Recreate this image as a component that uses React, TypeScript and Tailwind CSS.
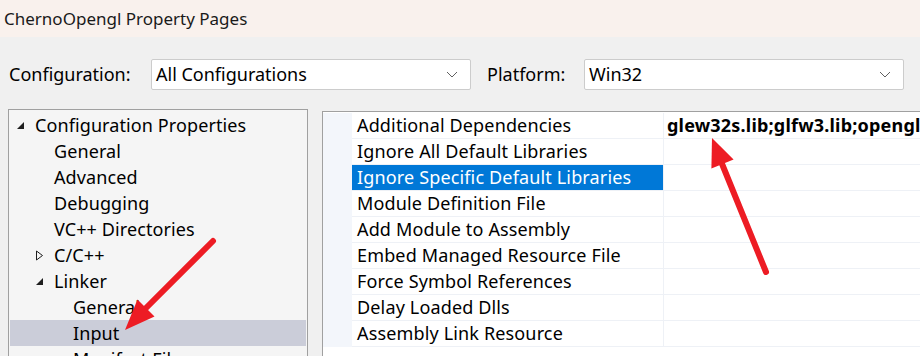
import React from 'react';

const FONT = { fontFamily: '"Noto Sans", "Open Sans", sans-serif' };

type TreeItem = { label: string; level: number; icon?: 'open' | 'closed'; selected?: boolean };

const TREE: TreeItem[] = [
  { label: 'Configuration Properties', level: 0, icon: 'open' },
  { label: 'General', level: 1 },
  { label: 'Advanced', level: 1 },
  { label: 'Debugging', level: 1 },
  { label: 'VC++ Directories', level: 1 },
  { label: 'C/C++', level: 1, icon: 'closed' },
  { label: 'Linker', level: 1, icon: 'open' },
  { label: 'General', level: 2 },
  { label: 'Input', level: 2, selected: true },
  { label: 'Manifest File', level: 2 },
];

const PROPS = [
  { name: 'Additional Dependencies', value: 'glew32s.lib;glfw3.lib;opengl32.lib;%(AdditionalDependencies)' },
  { name: 'Ignore All Default Libraries', value: '' },
  { name: 'Ignore Specific Default Libraries', value: '', selected: true },
  { name: 'Module Definition File', value: '' },
  { name: 'Add Module to Assembly', value: '' },
  { name: 'Embed Managed Resource File', value: '' },
  { name: 'Force Symbol References', value: '' },
  { name: 'Delay Loaded Dlls', value: '' },
  { name: 'Assembly Link Resource', value: '' },
];

function Expander({ kind }: { kind: 'open' | 'closed' }) {
  if (kind === 'open') {
    return (
      <svg width="9" height="9" viewBox="0 0 9 9" className="shrink-0">
        <polygon points="8,1 8,8 1,8" fill="#1e1e1e" />
      </svg>
    );
  }
  return (
    <svg width="9" height="11" viewBox="0 0 9 11" className="shrink-0">
      <polygon points="1.5,1 7.5,5.5 1.5,10" fill="none" stroke="#1e1e1e" strokeWidth="1" />
    </svg>
  );
}

function Select({ value }: { value: string }) {
  return (
    <div className="flex h-[31px] w-[320px] items-center justify-between rounded-[2px] border border-[#cccccc] bg-white pl-[4px] pr-[12px]">
      <span className="text-[18px] text-black">{value}</span>
      <svg width="12" height="7" viewBox="0 0 12 7">
        <polyline points="1,1 6,6 11,1" fill="none" stroke="#606060" strokeWidth="1" />
      </svg>
    </div>
  );
}

export default function App() {
  return (
    <div className="relative h-[356px] w-[920px] overflow-hidden bg-[#f0f0f0]" style={FONT}>
      <div className="flex h-[37px] items-center bg-[#f9f1ed] pl-[4px] text-[17px] text-[#1a1a1a]">
        ChernoOpengl Property Pages
      </div>

      <div className="mt-[22px] flex items-center pl-[9px]">
        <span className="w-[142px] text-[18px] text-black">Configuration:</span>
        <Select value="All Configurations" />
        <span className="ml-[16px] w-[97px] text-[18px] text-black">Platform:</span>
        <Select value="Win32" />
      </div>

      <div className="mt-[19px] flex items-start pl-[8px]">
        <div className="h-[260px] w-[300px] shrink-0 border border-[#a0a0a0] bg-[#f5f5f5] px-[1px] pt-[2px]">
          {TREE.map((item, i) => (
            <div
              key={i}
              className={`flex h-[26px] items-center text-[18px] leading-none text-black ${item.selected ? 'bg-[#cbcdd9]' : ''}`}
              style={{ paddingLeft: 6 + item.level * 19 }}
            >
              <span className="flex w-[19px] items-center justify-start">
                {item.icon && <Expander kind={item.icon} />}
              </span>
              <span className="tracking-[0.1px]">{item.label}</span>
            </div>
          ))}
        </div>

        <div className="ml-[14px] mt-[2px] flex h-[260px] flex-1 border-l border-t border-[#a0a0a0] bg-white pt-[1px]">
          <div className="h-[234px] w-[29px] shrink-0 bg-[#f3f6fb]" />
          <div className="flex flex-1 flex-col">
            {PROPS.map((p) => (
              <div key={p.name} className="flex h-[26px] border-b border-[#eef1f6]">
                <div
                  className={`flex w-[311px] shrink-0 items-center pl-[5px] text-[18px] tracking-[0.15px] ${p.selected ? 'bg-[#0078d7] text-white' : 'text-black'}`}
                >
                  {p.name}
                </div>
                <div className="flex flex-1 items-center overflow-hidden whitespace-nowrap border-l border-[#eef1f6] pl-[3px] text-[18px] font-bold tracking-[0.2px] text-black">
                  {p.value}
                </div>
              </div>
            ))}
          </div>
        </div>
      </div>

      <svg className="pointer-events-none absolute left-0 top-0" width="920" height="356" viewBox="0 0 920 356">
        <line x1="213" y1="241" x2="142" y2="312" stroke="#ed1c24" strokeWidth="6" strokeLinecap="round" />
        <polygon points="125,330 137.5,299.5 154.5,316.5" fill="#ed1c24" />
        <line x1="766" y1="272" x2="718" y2="154" stroke="#ed1c24" strokeWidth="6" strokeLinecap="round" />
        <polygon points="712,138 733.6,159.5 711.4,168.5" fill="#ed1c24" />
      </svg>
    </div>
  );
}
